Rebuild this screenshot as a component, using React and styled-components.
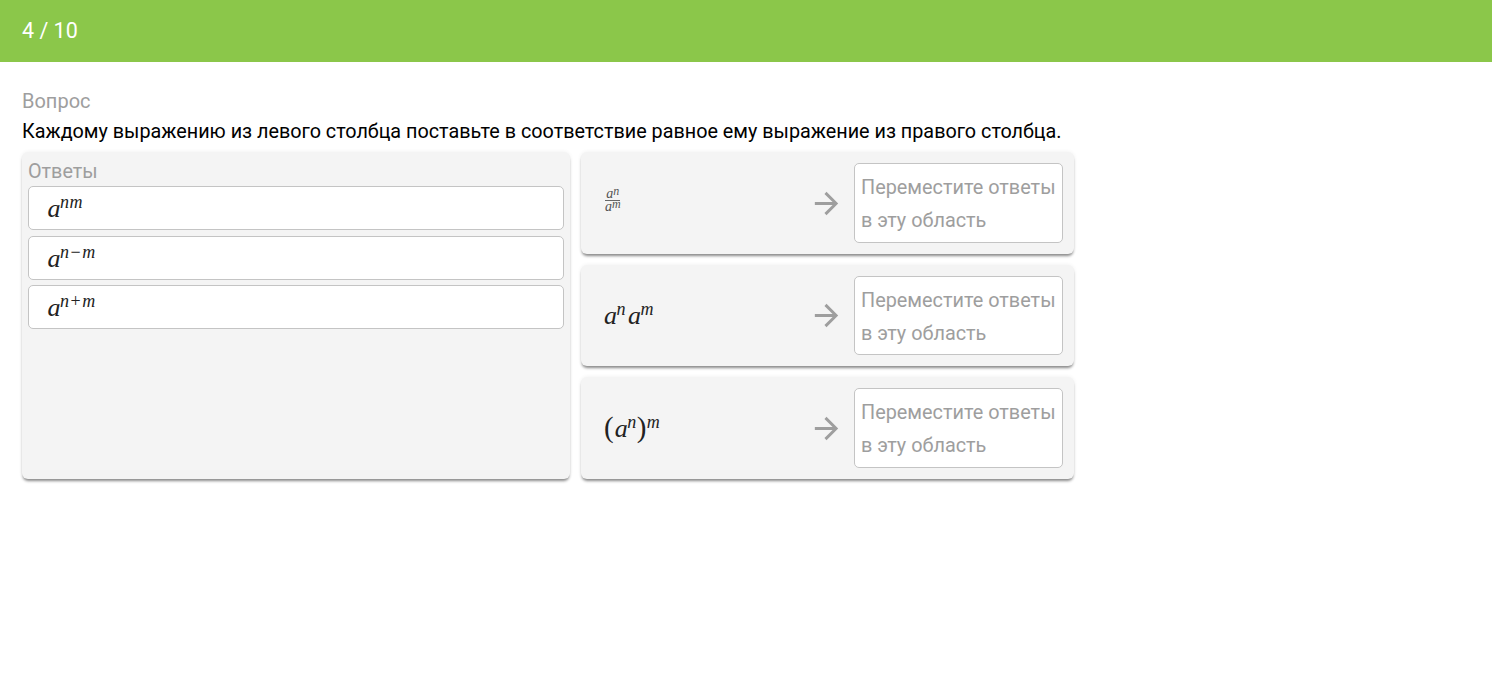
import React from "react";
import styled, { createGlobalStyle } from "styled-components";

const GlobalStyle = createGlobalStyle`
  html, body {
    margin: 0;
    padding: 0;
    background: #ffffff;
    font-family: Roboto, "Liberation Sans", sans-serif;
  }
`;

const Header = styled.header`
  height: 62px;
  padding: 0 22px 2px;
  box-sizing: border-box;
  display: flex;
  align-items: center;
  background: #8bc74a;
  color: #ffffff;
  font-size: 21.5px;
`;

const Content = styled.main`
  padding: 24px 22px 40px;
  width: 1052px;
`;

const Label = styled.div`
  color: #9e9e9e;
  font-size: 20px;
  line-height: 30px;
`;

const Question = styled.div`
  color: #000000;
  font-size: 19.79px;
  line-height: 30px;
  padding-top: 1px;
  margin-bottom: 5px;
  white-space: nowrap;
`;

const Board = styled.div`
  display: grid;
  grid-template-columns: 548px 493px;
  gap: 11px;
`;

const Panel = styled.section`
  background: #f4f4f4;
  border-radius: 6px;
  box-shadow: 0 3px 3px -1px rgba(0, 0, 0, 0.45), 0 0 4px rgba(0, 0, 0, 0.07);
`;

const AnswersPanel = styled(Panel)`
  height: 327px;
  padding: 5px 6px 6px;
  box-sizing: border-box;
  display: flex;
  flex-direction: column;
  gap: 5.5px;
`;

const AnswersTitle = styled(Label)`
  font-size: 19.8px;
  line-height: 29px;
  margin-bottom: -5.5px;
`;

const Answer = styled.div`
  height: 44px;
  box-sizing: border-box;
  padding: 2px 19px 0 18.5px;
  display: flex;
  align-items: center;
  background: #ffffff;
  border: 1px solid #c4c4c4;
  border-radius: 5px;
`;

const Rows = styled.div`
  display: flex;
  flex-direction: column;
  gap: 11px;
`;

const Row = styled(Panel)`
  height: ${(p) => p.$height}px;
  box-sizing: border-box;
  padding: 11px 11px 11px 23px;
  display: flex;
  align-items: center;
`;

const Expression = styled.div`
  flex: 1;
  display: flex;
  align-items: center;
`;

const Arrow = styled.svg`
  width: 35px;
  height: 35px;
  margin-right: 10px;
  fill: #9e9e9e;
  flex: none;
`;

const DropZone = styled.div`
  width: 209px;
  align-self: stretch;
  box-sizing: border-box;
  padding: 7px 6px;
  background: #ffffff;
  border: 1px solid #c4c4c4;
  border-radius: 5px;
  color: #9e9e9e;
  font-size: 19.85px;
  line-height: 33px;
  white-space: nowrap;
`;

const Formula = styled.span`
  font-family: "Liberation Serif", "DejaVu Serif", serif;
  font-style: italic;
  font-size: 26px;
  line-height: 28px;
  color: #222222;
  white-space: nowrap;
`;

const Sup = styled.sup`
  font-size: 18px;
  line-height: 0;
  vertical-align: 9px;
  margin-left: -0.5px;
  margin-right: ${(p) => p.$after || 0}px;
  letter-spacing: 0.5px;
`;

const Op = styled.span`
  font-style: normal;
  margin: 0 1px;
`;

const Paren = styled.span`
  font-style: normal;
  font-size: 29px;
  font-weight: 300;
  margin-right: ${(p) => p.$after || 0}px;
`;

const Fraction = styled.span`
  display: inline-flex;
  flex-direction: column;
  align-items: center;
  font-family: "Liberation Serif", "DejaVu Serif", serif;
  font-style: italic;
  font-size: 14px;
  line-height: 12px;
  color: #555555;
  margin-bottom: 5px;
`;

const FractionPart = styled.span`
  padding: 0 1px;
  border-bottom: ${(p) => (p.$top ? "1px solid #666666" : "none")};
`;

const SmallSup = styled.sup`
  font-size: 12px;
  line-height: 0;
  vertical-align: 3px;
`;

const rows = [
  {
    height: 102,
    math: (
      <Fraction>
        <FractionPart $top>
          a<SmallSup>n</SmallSup>
        </FractionPart>
        <FractionPart>
          a<SmallSup>m</SmallSup>
        </FractionPart>
      </Fraction>
    ),
  },
  {
    height: 101,
    math: (
      <Formula>
        a<Sup $after={2}>n</Sup>a<Sup>m</Sup>
      </Formula>
    ),
  },
  {
    height: 102,
    math: (
      <Formula>
        <Paren $after={1}>(</Paren>a<Sup>n</Sup>
        <Paren $after={1}>)</Paren>
        <Sup>m</Sup>
      </Formula>
    ),
  },
];

const App = () => (
  <>
    <GlobalStyle />
    <Header>4 / 10</Header>
    <Content>
      <Label>Вопрос</Label>
      <Question>
        Каждому выражению из левого столбца поставьте в соответствие равное ему
        выражение из правого столбца.
      </Question>
      <Board>
        <AnswersPanel>
          <AnswersTitle>Ответы</AnswersTitle>
          <Answer>
            <Formula>
              a<Sup>nm</Sup>
            </Formula>
          </Answer>
          <Answer>
            <Formula>
              a
              <Sup>
                n<Op>−</Op>m
              </Sup>
            </Formula>
          </Answer>
          <Answer>
            <Formula>
              a
              <Sup>
                n<Op>+</Op>m
              </Sup>
            </Formula>
          </Answer>
        </AnswersPanel>
        <Rows>
          {rows.map((row, i) => (
            <Row key={i} $height={row.height}>
              <Expression>{row.math}</Expression>
              <Arrow viewBox="0 0 24 24">
                <path d="M12 4l-1.41 1.41L16.17 11H4v2h12.17l-5.58 5.59L12 20l8-8z" />
              </Arrow>
              <DropZone>
                Переместите ответы
                <br />в эту область
              </DropZone>
            </Row>
          ))}
        </Rows>
      </Board>
    </Content>
  </>
);

export default App;
